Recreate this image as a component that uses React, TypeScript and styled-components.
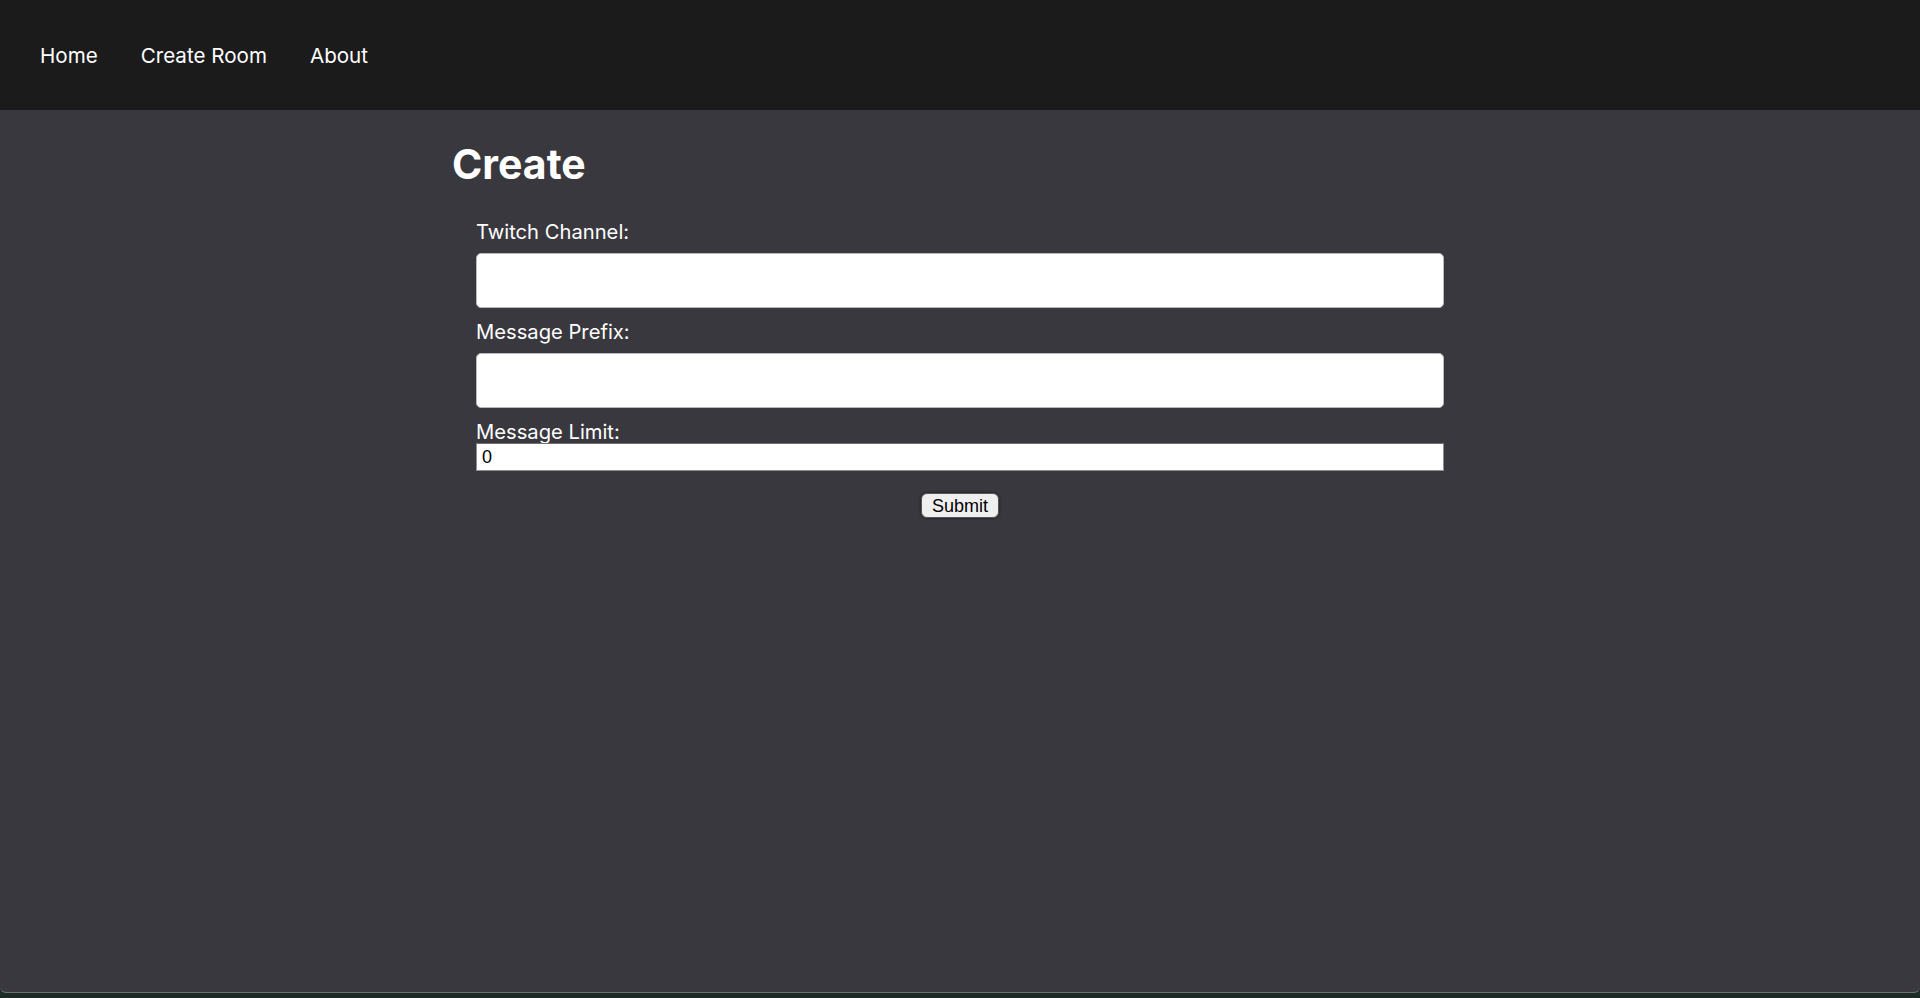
import React from 'react';
import styled, { createGlobalStyle } from 'styled-components';

const GlobalStyle = createGlobalStyle`
  html, body {
    margin: 0;
    padding: 0;
    height: 100%;
    background: #1c2b26;
  }
  #root {
    height: 100%;
  }
`;

const Page = styled.div`
  height: 998px;
  display: flex;
  flex-direction: column;
  font-family: Inter, 'Noto Sans', sans-serif;
  color: #fff;
`;

const Nav = styled.nav`
  height: 110px;
  flex-shrink: 0;
  display: flex;
  align-items: center;
  gap: 43px;
  padding: 0 40px;
  background: #1b1b1c;
`;

const NavLink = styled.a`
  font-size: 20.6px;
  color: #fff;
  text-decoration: none;
  cursor: pointer;
`;

const Main = styled.main`
  flex: 1;
  background: #39383e;
  border-bottom: 1px solid #6e716f;
  border-radius: 0 0 6px 6px;
  margin-bottom: 5px;
  padding-top: 34px;
`;

const Container = styled.div`
  width: 1016px;
  margin: 0 auto;
`;

const Title = styled.h1`
  margin: 0;
  font-size: 41px;
  line-height: 1;
  font-weight: 700;
`;

const Form = styled.form`
  display: flex;
  flex-direction: column;
  padding: 35px 24px 0;
`;

const Label = styled.label`
  font-size: 20.2px;
  line-height: 23px;
`;

const TextInput = styled.input`
  box-sizing: border-box;
  height: 55px;
  margin: 10px 0 12px;
  border: 1px solid #b9b9bd;
  border-radius: 5px;
  background: #fff;
  padding: 0 12px;
  font-size: 18px;
  font-family: inherit;
  outline: none;
`;

const NumberInput = styled.input`
  box-sizing: border-box;
  height: 28px;
  margin: 0;
  border: 1px solid #8d8d93;
  border-top-color: #6f6f74;
  background: #fff;
  padding: 0 5px;
  font-size: 18px;
  font-family: 'Liberation Sans', Arial, sans-serif;
  color: #000;
  outline: none;
`;

const SubmitButton = styled.button`
  align-self: center;
  margin-top: 22px;
  height: 25px;
  padding: 0 10px;
  font-family: 'Liberation Sans', Arial, sans-serif;
  font-size: 18px;
  line-height: 1;
  color: #000;
  background: #efefef;
  border: 1px solid #555;
  border-radius: 6px;
  box-shadow: 0 0 3px rgba(0, 0, 0, 0.6);
  cursor: pointer;
`;

export default function App() {
  return (
    <>
      <GlobalStyle />
      <Page>
        <Nav>
          <NavLink>Home</NavLink>
          <NavLink>Create Room</NavLink>
          <NavLink>About</NavLink>
        </Nav>
        <Main>
          <Container>
            <Title>Create</Title>
            <Form onSubmit={(e) => e.preventDefault()}>
              <Label htmlFor="channel">Twitch Channel:</Label>
              <TextInput id="channel" type="text" />
              <Label htmlFor="prefix">Message Prefix:</Label>
              <TextInput id="prefix" type="text" />
              <Label htmlFor="limit">Message Limit:</Label>
              <NumberInput id="limit" type="number" defaultValue={0} />
              <SubmitButton type="submit">Submit</SubmitButton>
            </Form>
          </Container>
        </Main>
      </Page>
    </>
  );
}
